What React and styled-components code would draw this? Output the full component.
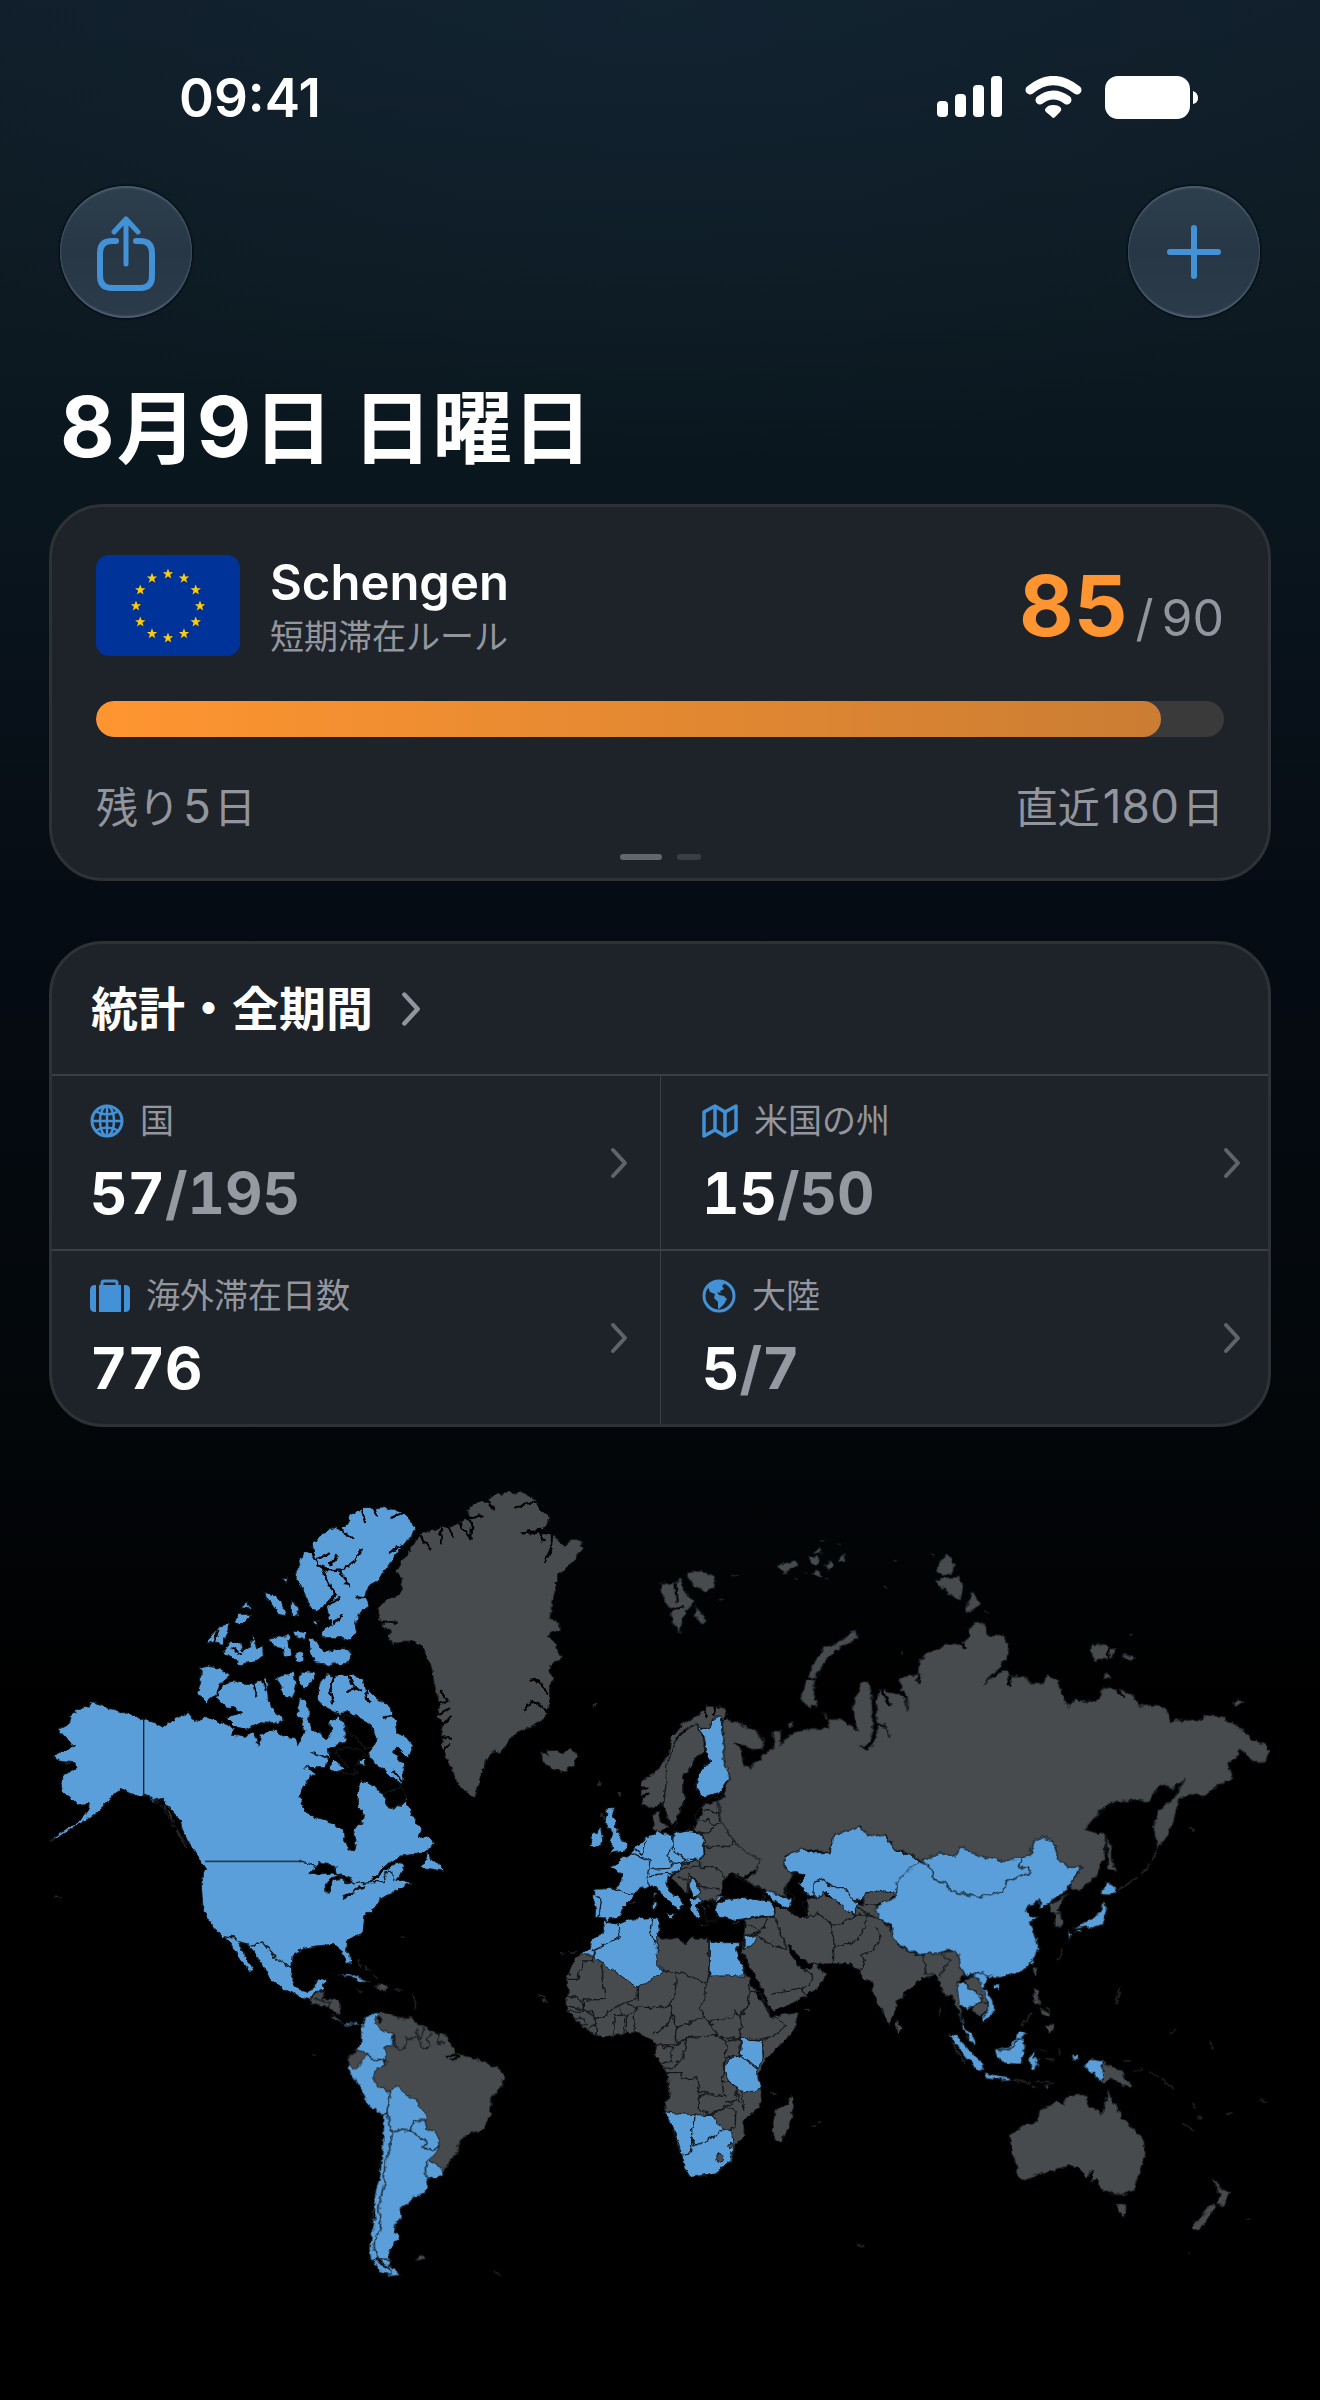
import React from "react";
import styled, { createGlobalStyle } from "styled-components";

const BLUE = "#4391d6";
const VISITED = "#5a9fda";
const LAND = "#474b4d";
const LINE = "#14191d";
const SEA = "#010203";

const GlobalStyle = createGlobalStyle`
  *,
  *::before,
  *::after {
    box-sizing: border-box;
  }

  body {
    margin: 0;
    background: #000;
    color: #fff;
    font-family: Inter, "Noto Sans CJK JP", sans-serif;
  }

  h1,
  h2,
  p {
    margin: 0;
  }
`;

const Page = styled.main`
  min-height: 100vh;
  padding: 68px 49px 0;
  background:
    radial-gradient(
      ellipse 900px 460px at 50% 0,
      rgba(24, 50, 72, 0.25),
      rgba(24, 50, 72, 0)
    ),
    linear-gradient(
      #101e29 0,
      #0d1a22 300px,
      #0a161e 480px,
      #060c14 900px,
      #03070a 1420px,
      #000 1700px
    );
`;

const StatusBar = styled.header`
  display: flex;
  align-items: center;
  justify-content: space-between;
  height: 60px;
  padding: 0 73px 0 130px;
`;

const Time = styled.time`
  font-size: 53px;
  font-weight: 600;
  line-height: 60px;
`;

const Indicators = styled.div`
  display: flex;
  align-items: center;
  gap: 23px;
  padding-bottom: 2px;
`;

const Toolbar = styled.nav`
  display: flex;
  justify-content: space-between;
  margin-top: 58px;
  padding: 0 11px;
`;

const RoundButton = styled.button`
  display: flex;
  align-items: center;
  justify-content: center;
  width: 132px;
  height: 132px;
  padding: 0;
  border: 0;
  border-radius: 50%;
  background: linear-gradient(#2d3e4d, #273746 50%, #2b3b4a);
  box-shadow:
    inset 0 2px 2px rgba(150, 175, 200, 0.3),
    inset 0 -2px 2px rgba(150, 175, 200, 0.35),
    0 0 2px 1px rgba(0, 0, 0, 0.7);
  color: ${BLUE};
`;

const Heading = styled.h1`
  margin-top: 60px;
  padding-left: 11px;
  font-size: 80px;
  font-weight: 700;
  line-height: 100px;

  span {
    margin-right: 2px;
    font-size: 84px;
    line-height: 84px;
  }
`;

const Card = styled.section`
  border: 3px solid #2e3237;
  border-radius: 54px;
  background: #1e232a;
  overflow: hidden;
`;

const StayCard = styled(Card)`
  margin-top: 26px;
  padding: 48px 44px 18px;
`;

const StayHeader = styled.div`
  display: flex;
  align-items: flex-start;
  gap: 30px;
  height: 101px;
`;

const StayName = styled.h2`
  font-size: 49px;
  font-weight: 600;
  line-height: 56px;
`;

const StayRule = styled.p`
  color: #94969e;
  font-size: 34px;
  line-height: 52px;
`;

const StayCount = styled.p`
  display: flex;
  align-items: baseline;
  gap: 8px;
  margin-left: auto;
  color: #92959d;
  font-size: 50px;
  line-height: 102px;

  strong {
    color: #ff9530;
    font-size: 84px;
    font-weight: 700;
  }
`;

const Track = styled.div`
  height: 36px;
  margin-top: 45px;
  border-radius: 18px;
  background: #3b3a3b;
  overflow: hidden;
`;

const Fill = styled.div`
  height: 100%;
  border-radius: 18px;
  background: linear-gradient(90deg, #ff9530, #cb7d33);
`;

const StayFooter = styled.div`
  display: flex;
  justify-content: space-between;
  height: 60px;
  margin-top: 39px;
  color: #92959d;
  font-size: 42px;
  line-height: 60px;

  span {
    margin: 0 3px;
    font-size: 46px;
  }
`;

const Pager = styled.div`
  display: flex;
  justify-content: center;
  gap: 15px;
  margin-top: 18px;
`;

const PagerMark = styled.span`
  width: ${(props) => (props.$active ? 42 : 24)}px;
  height: 6px;
  border-radius: 3px;
  background: ${(props) => (props.$active ? "#62666e" : "#393e45")};
`;

const StatsCard = styled(Card)`
  margin-top: 60px;
`;

const StatsLink = styled.a`
  display: flex;
  align-items: center;
  gap: 28px;
  height: 130px;
  padding: 0 39px;
  color: #fff;
  text-decoration: none;

  h2 {
    font-size: 47px;
    font-weight: 700;
    line-height: 60px;
  }
`;

const StatsGrid = styled.div`
  display: grid;
  grid-template-columns: 1fr 1fr;
`;

const StatCell = styled.a`
  display: flex;
  align-items: center;
  justify-content: space-between;
  height: 175px;
  padding: 0 32px 0 38px;
  border-top: 2px solid #3b3f45;
  color: #fff;
  text-decoration: none;

  &:nth-child(even) {
    padding-left: 41px;
    padding-right: 27px;
    border-left: 1px solid #3b3f45;
  }
`;

const StatLabel = styled.p`
  display: flex;
  align-items: center;
  gap: 16px;
  color: #94969e;
  font-size: 34px;
  line-height: 48px;

  svg {
    color: ${BLUE};
  }
`;

const StatValue = styled.p`
  margin-top: 12px;
  font-size: 58px;
  font-weight: 700;
  font-variant-numeric: tabular-nums;
  line-height: 72px;

  span {
    color: #9699a2;
  }
`;

const MapFigure = styled.figure`
  margin: 54px 0 0;

  svg {
    display: block;
    width: 100%;
    height: auto;
  }
`;

const SignalIcon = () => (
  <svg width="65" height="43" viewBox="0 0 65 43" fill="#fff">
    <rect x="0" y="25" width="11" height="16" rx="4" />
    <rect x="18" y="18" width="11" height="23" rx="4" />
    <rect x="36" y="9" width="11" height="32" rx="4" />
    <rect x="54" y="0" width="11" height="41" rx="4" />
  </svg>
);

const WifiIcon = () => (
  <svg width="57" height="43" viewBox="0 0 57 43" fill="none">
    <g stroke="#fff" strokeWidth="9" strokeLinecap="round">
      <path d="M5 14Q28 -5 52 14" />
      <path d="M15 24Q28 14 42 24" />
    </g>
    <path
      d="M28 29Q34 29 36 32Q37 34 35 36L30 41Q28 43 27 41L21 36Q19 34 21 32Q23 29 28 29Z"
      fill="#fff"
    />
  </svg>
);

const BatteryIcon = () => (
  <svg width="93" height="43" viewBox="0 0 93 43" fill="#fff">
    <rect x="0" y="0" width="85" height="43" rx="13" />
    <path d="M88 15Q93 17 93 22T88 28Z" />
  </svg>
);

const ShareIcon = () => (
  <svg
    width="60"
    height="80"
    viewBox="0 -4 60 80"
    fill="none"
    stroke="currentColor"
    strokeWidth="6"
    strokeLinecap="round"
    strokeLinejoin="round"
  >
    <path d="M20 25H16Q4 25 4 37V60Q4 72 16 72H44Q56 72 56 60V37Q56 25 44 25H40" />
    <path d="M30 48V4M18 16L30 3L42 16" strokeWidth="5" />
  </svg>
);

const PlusIcon = () => (
  <svg
    width="60"
    height="60"
    viewBox="0 0 60 60"
    stroke="currentColor"
    strokeWidth="6"
    strokeLinecap="round"
  >
    <path d="M30 6V54M6 30H54" />
  </svg>
);

const Chevron = ({ size, color }) => (
  <svg
    width={size}
    height={size * 2 - 4}
    viewBox="0 0 18 32"
    fill="none"
    stroke={color}
    strokeWidth="4"
    strokeLinecap="round"
    strokeLinejoin="round"
  >
    <path d="M3 3L15 16L3 29" />
  </svg>
);

const GlobeIcon = () => (
  <svg
    width="34"
    height="34"
    viewBox="0 0 34 34"
    fill="none"
    stroke="currentColor"
    strokeWidth="2.5"
  >
    <circle cx="17" cy="17" r="15" strokeWidth="3" />
    <ellipse cx="17" cy="17" rx="7" ry="15" />
    <path d="M17 2V32M2 17H32M5 7Q17 14 29 7M5 27Q17 20 29 27" />
  </svg>
);

const MapIcon = () => (
  <svg
    width="36"
    height="34"
    viewBox="0 0 36 34"
    fill="none"
    stroke="currentColor"
    strokeWidth="3.5"
    strokeLinejoin="round"
  >
    <path d="M2 8L13 2L23 8L34 2V26L23 32L13 26L2 32ZM13 2V26M23 8V32" />
  </svg>
);

const SuitcaseIcon = () => (
  <svg width="40" height="34" viewBox="0 0 40 34" fill="currentColor">
    <path d="M6 6V33H5Q0 33 0 28V11Q0 6 5 6Z" />
    <path d="M34 6V33H35Q40 33 40 28V11Q40 6 35 6Z" />
    <rect x="9" y="6" width="22" height="27" />
    <path
      d="M12 7V4Q12 2 14 2H25Q27 2 27 4V7"
      fill="none"
      stroke="currentColor"
      strokeWidth="3"
    />
  </svg>
);

const AmericasIcon = () => (
  <svg width="34" height="34" viewBox="0 0 34 34" fill="currentColor">
    <circle
      cx="17"
      cy="17"
      r="15"
      fill="none"
      stroke="currentColor"
      strokeWidth="3"
    />
    <path d="M4 9Q9 1 18 1L24 3L20 7L22 10L18 12L19 14L15 13L17 16L22 17L25 20L22 25L17 30L16 29L16 23L12 19L13 15L8 13L6 8Z" />
  </svg>
);

const EuFlag = () => (
  <svg width="144" height="101" viewBox="0 0 144 101">
    <rect width="144" height="101" rx="13" fill="#003399" />
    <g transform="translate(72 51)">
      {Array.from({ length: 12 }, (_, i) => {
        const angle = (i * Math.PI) / 6;
        return (
          <path
            key={i}
            transform={`translate(${32 * Math.sin(angle)} ${-32 * Math.cos(angle)})`}
            d="M0 -5.5L1.4 -1.7H5.2L2.1 .7L3.3 4.5L0 2.2L-3.3 4.5L-2.1 .7L-5.2 -1.7H-1.4Z"
            fill="#ffcc00"
          />
        );
      })}
    </g>
  </svg>
);

// Each region is drawn in its own grid: origin is where the grid starts on
// the map, unit is how many grid steps (x, y) make one map pixel.
const regions = [
  {
    name: "north-america",
    origin: [40, 1470],
    unit: [3, 3],
    visited: [
      // mainland
      "155,692 195,708 230,718 270,730 310,745 345,755 368,768 390,750 420,738 450,722 460,748 480,752 485,735 520,745 555,760 585,772 575,792 610,797 645,785 655,830 662,790 700,775 730,795 765,800 772,825 785,795 795,780 785,745 768,730 780,680 795,685 808,720 803,745 815,775 845,790 860,812 872,790 870,750 900,738 915,770 915,810 885,825 865,832 870,860 815,845 862,862 855,890 795,890 825,905 800,930 780,975 790,1010 810,1035 850,1045 885,1065 910,1075 912,1100 925,1135 940,1140 948,1110 940,1075 965,1060 970,1030 955,1000 955,960 960,930 985,935 1010,950 1030,975 1035,1000 1060,1018 1085,1000 1100,985 1110,1020 1130,1055 1145,1075 1135,1100 1165,1095 1180,1120 1165,1140 1130,1150 1080,1155 1050,1175 1000,1220 1030,1205 1055,1183 1080,1175 1095,1185 1085,1205 1070,1225 1115,1235 1060,1262 1020,1285 1005,1310 975,1332 969,1385 945,1395 920,1410 918,1430 930,1455 932,1475 922,1478 905,1440 880,1420 830,1425 790,1432 760,1450 752,1516 770,1552 800,1560 822,1550 830,1525 860,1523 850,1555 825,1562 810,1585 780,1578 730,1555 690,1525 670,1484 638,1440 610,1412 596,1415 615,1455 640,1500 628,1500 590,1450 570,1410 545,1395 509,1355 488,1300 484,1240 488,1205 500,1195 470,1150 445,1115 425,1070 420,1045 395,1020 370,985 345,990 315,975 290,975 265,965 240,955 225,965 205,990 180,1015 150,1040 110,1065 60,1095 25,1110 70,1080 115,1055 140,1025 148,1000 120,1003 95,985 70,965 60,935 75,910 108,895 105,875 60,872 40,852 70,840 105,825 85,810 55,775 85,760 90,735 120,712 145,708",
      // newfoundland
      "1165,1145 1172,1165 1200,1180 1212,1202 1180,1195 1148,1190",
      // ellesmere
      "818,212 850,190 885,165 900,175 915,165 935,130 965,113 1000,112 1030,107 1060,115 1085,125 1110,150 1124,170 1115,195 1085,225 1065,255 1040,290 1015,325 985,350 978,375 987,405 955,430 945,460 950,485 930,510 900,500 845,500 840,485 880,460 868,440 860,405 835,420 815,415 800,380 785,350 768,320 775,285 788,245 805,245 820,250",
      "500,515 540,465 568,458 560,490 545,520 525,515",
      "550,545 570,515 600,512 610,540 630,530 637,490 650,530 668,525 670,555 640,570 600,582 580,560",
      "583,450 600,430 635,430 605,460",
      "600,410 625,395 632,412",
      "675,365 700,370 725,395 738,435 715,430 695,400 678,380",
      "755,390 780,415 775,432 755,430",
      "690,505 715,495 745,495 752,550 735,560 730,530 700,525",
      "762,480 797,485 792,505 770,500",
      "768,545 790,545 792,572 770,570",
      "805,500 830,510 850,545 900,532 925,535 938,550 925,577 870,580 820,575",
      "820,450 832,450 832,465 822,462",
      "730,320 742,320 740,335",
      "480,590 510,585 545,595 570,615 540,640 530,670 500,695 485,680 470,668 482,635",
      "530,680 550,645 580,628 610,640 640,640 680,618 685,690 700,720 735,745 700,758 660,755 620,775 590,770 560,740 605,725 590,712 560,708",
      "707,620 740,610 762,600 768,650 757,685 730,672 720,640",
      "782,600 825,605 815,635 790,655 778,640",
      // baffin
      "838,640 860,612 885,615 930,610 965,620 975,645 1010,680 1045,705 1065,745 1070,785 1100,800 1120,825 1105,862 1075,832 1058,840 1090,880 1088,940 1060,925 1040,905 1005,880 985,850 1000,830 1012,800 990,760 950,735 920,720 900,730 860,712 835,690",
      "870,897 880,862 917,895 890,902",
      "965,785 978,785 978,805 965,805",
      "955,868 978,868 976,882 958,880",
    ],
    land: [],
    cuts: [
      "815,240 832,280 860,298 910,295 945,270 965,235",
      "850,300 870,345 888,372 852,410",
      "868,280 890,255",
      "835,262 870,248",
      "895,300 930,345",
      "890,170 940,200",
      "1050,243 1090,220",
      "965,113 975,150",
      "1000,112 1010,135",
      "1055,140 1085,128",
      "985,350 1010,340",
      "950,376 985,380",
      "885,455 905,432",
      "870,400 900,380",
      "575,530 605,550",
      "535,480 520,515",
      "885,618 870,660 880,700",
      "925,615 935,640 960,655",
      "925,660 955,650",
      "640,640 652,680",
      "665,625 678,655",
      "975,645 985,690",
      "1030,740 1060,735",
      "1060,900 1085,930",
      "1040,1190 1000,1225",
    ],
    waters: [
      "810,1207 840,1172 885,1190 890,1212 860,1206 835,1210",
      "850,1262 868,1222 905,1212 935,1220 930,1240 905,1225 880,1230 868,1262",
      "905,1275 940,1262 938,1270 910,1285",
      "940,1255 975,1243 970,1254",
      "890,838 930,830 960,835 985,860 960,860 940,895 955,905 930,910 900,900 925,885 895,860",
      "905,735 950,735 985,760 1010,800 1000,830 970,832 955,800 935,800 920,770",
      "1060,955 1085,945 1100,985 1060,1015 1035,1000 1030,970",
    ],
    borders: [
      "311,972 345,985 370,1010 400,1060 440,1120",
      "780,1171 830,1187",
      "551,1397 583,1401 629,1424 670,1415 707,1461 753,1489",
      "890,1210 935,1240 985,1232 1030,1232 1045,1200 1058,1205 1062,1230",
    ],
    straight: ["311,745 311,972", "495,1171 780,1171"],
    specks: ["375,1000 400,1050", "410,1080 440,1130", "50,1275 62,1278"],
  },
  {
    name: "greenland",
    origin: [360, 1470],
    unit: [3, 3],
    visited: [],
    land: [
      "455,65 490,65 510,75 530,90 540,115 565,135 568,155 550,175 575,185 600,215 615,225 630,207 655,210 672,230 650,260 625,285 600,310 590,340 580,370 572,410 570,445 590,450 600,475 565,490 575,510 590,520 595,550 610,555 565,585 570,600 580,625 568,650 568,700 565,730 540,755 500,775 465,785 440,820 420,845 400,840 378,870 365,905 355,945 345,980 325,965 295,945 280,905 262,870 245,820 245,790 250,760 232,735 240,700 225,650 215,590 195,540 165,512 135,510 100,520 85,500 90,480 65,460 50,415 80,385 120,370 130,320 108,305 125,275 145,250 170,205 190,185 240,170 275,165 300,155 330,140 320,115 350,95 385,90 405,72 440,62",
      "545,840 565,856 560,840 590,838 610,845 630,832 652,860 640,885 600,902 575,890 548,872",
    ],
    cuts: [
      "180,195 210,235",
      "243,170 245,215",
      "262,162 282,198",
      "300,160 333,205 337,160 318,140 368,133",
      "385,90 402,112",
      "465,112 495,100 530,95",
      "488,187 540,180 580,188 575,230 556,272",
      "540,182 548,210",
      "510,628 540,632 560,665",
      "495,720 515,690 535,700 565,725",
      "65,455 110,455",
      "240,660 265,690 235,700",
      "235,730 270,712",
      "250,760 270,740",
      "248,800 270,800",
      "250,840 268,820",
      "600,320 590,335",
    ],
    waters: [],
    borders: [],
    specks: ["700,705 710,698", "717,930 722,945", "775,965 780,975"],
  },
  {
    name: "south-america",
    origin: [300, 1930],
    unit: [3, 3],
    visited: [
      "195,260 215,250 240,240 300,300 300,358 370,500 425,620 430,700 428,735 405,745 380,738 388,768 370,790 335,797 330,820 305,822 302,860 282,885 285,905 298,915 280,940 265,960 270,1000 300,1032 270,1036 240,1020 215,985 210,950 215,910 217,850 225,790 240,730 248,640 252,555 200,520 180,470 145,415 148,375 170,358 183,330 183,290",
      "125,278 150,280 170,272 182,285 165,278 145,287",
      "112,132 150,127 182,140 210,152 185,154 155,136",
    ],
    land: [
      "225,262 240,240 265,250 300,262 340,262 352,280 375,285 400,305 435,310 455,340 465,365 515,380 560,395 605,418 613,440 600,470 575,500 572,550 550,595 510,608 475,632 472,665 450,690 430,722 415,702 385,688 415,655 420,630 405,600 380,595 380,550 355,525 350,505 305,485 300,465 265,478 230,465 218,440 232,412 258,405 255,348 278,345 277,308 235,290",
      "146,380 170,355 203,368 190,390 165,414 148,400",
      "30,208 50,180 75,180 65,203 120,205 118,252 95,238 75,222 35,220",
      "92,252 110,255 127,275 115,272",
      "225,165 245,158 270,172 245,178",
      "170,177 190,179 180,183",
      "348,983 362,975 382,980 365,990",
    ],
    cuts: [
      "240,258 240,275",
      "440,378 460,368 478,378 455,386",
      "225,835 215,900",
      "225,985 265,1010",
    ],
    waters: [],
    borders: [
      "203,368 225,388 255,390 258,405",
      "265,478 268,510 260,545 275,600 270,650 255,690 252,760 236,830 242,890 222,940 232,985 268,985 270,1030",
      "252,555 262,545",
      "275,600 300,597 330,600 340,570 378,567",
      "330,600 380,630 372,652 400,655 415,648",
      "385,688 376,710 378,738",
      "280,308 282,340 300,358 318,345 318,322",
      "350,290 355,320 318,322",
      "372,290 365,310 358,325 370,352 390,347 382,325 390,308",
      "420,310 415,340 435,335",
      "50,205 90,215 85,232",
    ],
    specks: [
      "175,90 180,110",
      "195,100 205,120",
      "220,130 228,140",
      "285,178 305,176",
      "338,190 347,210 346,235",
      "38,370 48,375",
      "715,190 720,196",
      "725,208 735,205",
      "585,1020 600,1032",
      "305,18 310,20",
    ],
  },
  {
    name: "europe",
    origin: [560, 1640],
    unit: [3, 3],
    visited: [
      // finland
      "408,248 425,262 450,262 460,228 485,228 485,255 493,290 492,320 497,370 512,405 480,455 430,467 412,450 412,405 450,360 440,335 432,285",
      "102,745 165,742 180,735 185,700 150,675 175,668 180,655 215,635 240,605 258,590 285,585 290,570 310,578 340,580 380,570 428,577 432,640 418,655 365,668 360,690 325,705 320,735 345,765 375,787 362,792 355,812 345,795 300,755 285,735 265,735 240,745 220,760 215,775 190,800 180,825 140,837 125,830 105,825 108,795 102,780",
      "318,820 347,817 340,834",
      "278,780 288,780 287,805 278,805",
      "281,755 288,755 286,772",
      "138,500 165,500 158,520 170,540 165,560 180,580 188,600 207,605 195,630 145,638 165,618 148,605 158,575 135,545 140,520",
      "95,578 125,562 130,590 120,615 90,622",
      "388,775 420,768 445,775 430,782 405,790 422,825 410,832 390,805",
      "470,790 505,775 540,768 600,777 635,780 645,822 600,825 560,832 520,838 480,828 466,810",
      "462,768 490,768 470,782",
      "672,650 720,622 760,635 810,635 820,580 895,557 920,570 945,588 970,578 1010,630 1050,640 1085,665 1060,690 1010,745 1005,762 950,750 915,770 890,795 885,822 840,795 800,755 762,770 740,755 715,735 735,705 700,695 690,700 672,670",
    ],
    land: [
      // scandinavia
      "440,195 490,200 500,220 490,240 485,228 460,228 450,262 425,262 408,248 430,290 435,335 410,345 405,375 375,400 370,450 380,475 360,500 355,535 330,550 322,520 305,485 275,505 250,490 243,460 245,420 290,390 325,340 335,290 370,245 420,220",
      "275,522 300,510 300,545 325,555 300,572 282,562",
      // eastern europe
      "410,540 430,520 428,495 475,478 485,478 490,545 525,600 600,640 605,670 598,690 560,715 520,700 485,745 470,775 430,780 405,768 422,755 410,720 388,708 385,758 350,725 330,710 360,690 365,670 418,655 435,640 430,575 405,570",
      // middle east to the bay of bengal
      "558,835 645,825 645,800 670,805 700,820 735,832 742,820 745,790 735,770 765,772 790,758 830,780 870,815 885,822 890,795 915,760 950,750 1010,757 985,780 950,792 960,835 990,860 1010,910 1060,935 1120,940 1190,925 1200,970 1120,1005 1085,1010 1045,1050 1010,1080 1005,1120 985,1148 965,1110 940,1060 935,1020 915,1015 890,985 875,968 820,968 770,970 740,962 715,945 700,925 685,912 690,935 705,960 725,982 750,985 767,965 775,985 800,1000 770,1045 700,1085 640,1112 628,1095 600,1030 550,940 545,930 552,880",
      "1010,1140 1027,1165 1015,1175 1008,1165",
    ],
    over: [
      "388,708 410,720 422,755 400,767 388,740",
      "612,748 650,755 665,770 690,768 697,795 680,802 660,790 635,775",
      "552,888 585,880 590,893 570,915 552,925",
    ],
    cuts: [
      "245,440 262,440",
      "248,465 265,458",
      "350,290 375,270",
      "430,205 440,225",
      "465,200 462,220",
      "400,480 375,478",
    ],
    waters: [
      "680,715 705,695 735,698 733,710 715,725 745,765 740,780 728,790 742,825 715,832 690,800 700,765 680,745",
      "480,760 490,715 515,695 535,712 550,720 600,745 615,765 600,778 545,768 500,778",
      "545,712 580,685 590,690 575,715",
      "412,345 440,335 448,358 412,405 405,440 415,455 430,467 480,456 495,465 440,475 425,500 405,520 412,550 385,570 340,572 350,540 375,478 370,410",
      "425,785 440,840 470,840 466,785 440,778",
      "885,783 915,770 912,785 900,790",
    ],
    borders: [
      "405,250 370,268 345,300 320,370 318,430 310,490",
      "108,765 125,768 118,825",
      "165,742 195,755 220,760",
      "215,635 270,660 265,685 262,710 265,735",
      "225,625 250,640 258,600",
      "338,580 340,625 320,640 330,665 360,668 385,655 418,655",
      "345,632 380,655",
      "265,685 325,682 340,670",
      "262,710 290,700 325,697 358,690",
      "410,540 445,538 462,552 450,575 430,577",
      "430,505 475,515 480,545 462,552",
      "435,615 510,620 525,600",
      "418,655 420,680 470,680 495,710",
      "385,700 410,720 425,740 475,742",
      "365,685 400,672 420,680",
      "350,705 385,720 380,755",
      "560,850 600,870 552,885 552,925",
      "580,885 615,860 620,832",
      "645,825 660,870 680,920",
      "585,880 640,915 680,925",
      "730,985 757,1000 750,1030 725,1040 632,1060",
      "725,1040 735,1060",
      "735,832 770,815 812,845 822,905 820,968",
      "812,850 850,848 880,825 918,820 915,860 890,900 822,922",
      "918,820 955,830 990,860",
      "950,860 960,890 940,930 905,945 915,980 895,990",
      "762,770 762,725 790,715 820,740 855,740 880,780 915,775 905,790 950,792",
      "890,800 950,830",
      "1085,665 1060,695 1040,695 1010,745 1005,765",
      "1010,912 1060,938 1095,945 1095,1000",
      "1095,965 1130,965 1135,1000",
      "1120,950 1160,955 1145,1000",
    ],
    specks: [
      "420,850 445,852",
      "430,800 435,808",
      "445,790 450,800",
      "520,848 540,842",
      "215,790 225,786",
      "118,420 124,426",
      "175,455 180,465",
      "125,515 130,535",
      "100,195 110,190",
      "735,1108 745,1108",
    ],
  },
  {
    name: "africa",
    origin: [540, 1880],
    unit: [3, 3],
    visited: [],
    land: [
      "190,118 235,130 270,115 330,110 355,108 362,130 350,160 365,175 400,170 440,190 455,170 500,175 540,185 605,185 583,198 600,240 625,290 650,340 680,375 690,405 775,395 770,430 735,480 690,520 665,555 655,600 663,630 665,675 620,710 612,720 612,765 585,790 575,840 540,870 500,882 450,890 438,870 430,830 410,790 400,740 372,692 388,640 380,575 345,525 350,490 320,470 300,455 270,455 240,462 175,465 130,440 85,395 80,370 85,330 80,290 105,235 150,205 155,180 188,150",
      "755,645 763,670 745,740 725,780 705,778 697,740 705,690 740,670",
    ],
    over: [
      "190,118 235,130 240,168 215,180 160,205 160,222 120,222 150,205 155,180 188,150",
      "235,130 270,115 355,108 362,130 350,160 352,210 350,250 370,270 330,300 292,318 165,232 165,205 215,180 240,168",
      "508,180 540,185 600,185 588,200 600,240 615,285 508,285",
      "600,465 625,475 668,478 670,530 655,560 600,525 605,490",
      "565,530 600,525 652,565 655,600 660,630 612,632 570,605 552,570",
      "372,692 420,698 465,702 515,700 545,745 575,750 580,800 565,850 530,875 450,890 438,870 425,820 400,740",
    ],
    cuts: [],
    waters: [],
    borders: [
      "335,112 330,150 350,190",
      "80,292 115,292 118,270 128,265 128,240 160,240 160,222",
      "185,250 195,355 130,357",
      "292,318 292,355 255,365 205,390 195,408 165,408 130,385 130,357",
      "370,270 410,275 405,340 390,375 340,380 290,378 255,365",
      "410,270 505,308 508,180",
      "495,308 495,350 480,385 490,405 440,430 410,438 398,400 390,375",
      "490,405 505,420 575,410 585,390 600,410 625,370 630,290",
      "505,420 535,465 600,475 605,435 600,410",
      "410,438 405,470 415,490 440,470 530,463",
      "398,400 385,430 340,460",
      "287,378 278,450",
      "252,455 255,405 285,395",
      "222,458 222,405 250,402 240,380",
      "262,453 262,405",
      "170,465 165,408",
      "83,345 110,345 130,370 130,385 85,375",
      "85,390 160,392 165,430 145,440",
      "105,410 125,412 142,430 125,438",
      "350,492 415,492 440,470 430,530 400,560 375,562",
      "365,500 398,500 395,540 368,548",
      "380,575 420,575 430,595 470,590 478,630 555,648 545,605 552,570 555,530 560,480 530,463",
      "475,630 475,685 510,700 560,675 585,660 590,620 565,600 545,605",
      "478,648 495,642 495,630",
      "515,700 560,678 588,690 585,735 565,750",
      "590,618 595,655 612,688 605,632",
      "560,662 590,660",
      "560,530 600,525 600,475 562,480",
      "630,335 660,330 685,395 740,435 700,465 660,475 625,475",
      "670,530 668,490 675,475",
      "465,702 462,740 455,745 455,815 430,820",
      "455,765 462,795 500,780 545,748",
    ],
    spots: [
      "528,830 538,818 550,825 545,838 532,842",
      "566,795 573,786 579,795 572,802",
    ],
    specks: [
      "65,215 75,218",
      "90,214 112,212",
      "0,345 15,350",
      "8,358 18,360",
      "695,635 705,640",
      "817,735 823,735",
      "835,727 842,725",
      "800,388 808,388",
    ],
  },
  {
    name: "east-asia",
    origin: [840, 1840],
    unit: [3, 3],
    visited: [
      "245,60 400,-40 600,-60 700,40 725,75 690,130 660,165 620,190 600,205 605,185 590,178 555,208 570,225 597,225 568,245 590,290 595,320 575,365 540,395 510,400 485,410 440,405 430,392 385,405 370,395 358,370 358,345 330,325 300,335 240,340 200,325 160,300 155,255 120,235 105,200 165,170 170,125 195,95",
      "800,120 832,145 808,162 785,160",
      "792,180 800,205 787,250 740,268 740,255 700,262 720,250 770,225 785,200",
      "685,270 697,280 688,300",
      "702,272 725,262 722,274",
      "462,432 480,432 475,445 462,443",
      "350,430 375,425 385,445 420,460 425,485 395,495 378,505 360,490 365,535 382,568 400,585 410,617 390,600 370,560 358,520 352,470",
      "395,405 430,392 445,410 430,440 460,480 465,510 430,542 425,530 445,510 445,485 415,440 418,415",
      "325,580 350,585 400,640 430,665 432,690 410,685 370,640",
      "432,697 470,702 515,715 500,720 435,708",
      "465,625 510,615 540,570 560,575 548,590 555,620 540,670 480,665 468,640",
      "620,628 585,630 578,650 602,650 590,662 600,685 588,672 583,690 574,688 568,655 575,632",
      "695,643 718,645 715,655 700,655",
      "730,672 760,655 790,662 790,722 768,715 762,698 735,680",
      "575,735 590,738 580,740",
      "612,738 628,731 620,740",
    ],
    land: [
      "690,155 660,175 628,190 632,215 645,218 645,258 668,255 665,225 655,205 665,180",
      "300,335 345,330 358,350 360,375 370,400 350,430 355,470 365,530 350,500 340,465 315,465 300,425 285,400 260,400 250,340",
      "375,415 400,405 418,420 425,440 443,485 445,508 420,528 400,510 400,492 425,485 420,458 385,445",
      "790,662 840,690 860,715 880,738 850,735 820,715 790,727",
      "880,695 905,690 900,680 910,685",
      "585,375 592,378 588,405 580,400",
      "582,445 597,450 595,475 602,490 582,480",
      "600,500 632,520 628,530 605,520",
      "615,555 640,548 640,570 628,578",
      "512,880 545,855 590,840 605,805 650,780 670,790 685,765 735,760 745,770 738,790 785,818 800,770 805,745 815,780 830,795 845,830 880,865 912,900 917,940 900,990 880,1048 850,1062 830,1060 785,1050 770,1015 755,1020 758,985 740,1010 720,985 690,972 620,995 550,1015 528,1005 530,980 510,905",
      "830,1090 862,1090 860,1115 850,1125 838,1115",
      "1118,1010 1130,1020 1140,1045 1170,1050 1150,1095 1128,1090 1140,1065",
      "1115,1090 1125,1100 1095,1150 1070,1170 1053,1160 1085,1125",
    ],
    cuts: [],
    waters: [],
    borders: [
      "245,60 275,85 280,115 315,125 335,152 420,168 490,150 495,125 540,105 575,95 560,80 535,80 545,50",
      "475,628 520,620 530,595 550,592",
      "645,218 665,215",
      "300,340 330,355 300,405",
      "400,492 425,485 443,487",
    ],
    specks: [
      "1030,848 1062,870",
      "930,690 955,708",
      "965,715 1000,742",
      "1058,785 1065,800",
      "1075,825 1080,835",
      "1162,820 1176,815",
      "850,658 870,660",
      "575,515 545,555",
      "300,500 300,525",
      "335,605 375,668",
      "520,718 570,724",
      "590,722 640,726",
      "655,625 660,640",
      "615,655 640,655",
      "665,325 655,360",
      "830,490 840,440",
      "1110,600 1118,622",
      "1265,778 1280,780",
      "1220,1133 1230,1135",
      "1045,1235 1050,1237",
      "52,1210 68,1214",
      "990,575 1010,565",
      "625,500 630,515",
    ],
  },
  {
    name: "russia",
    origin: [640, 1500],
    unit: [2.45, 3],
    visited: [],
    land: [
      "200,660 215,655 240,665 285,690 303,720 300,745 275,745 230,722 250,750 252,790 272,803 278,782 298,780 295,760 325,745 330,720 325,690 345,690 345,730 370,700 400,685 440,685 465,680 460,655 490,655 515,672 532,690 522,640 522,610 535,570 540,545 560,545 567,570 570,640 570,700 555,735 535,735 560,745 580,710 583,675 605,680 612,710 600,672 578,665 580,590 590,560 610,575 632,575 650,595 655,630 655,590 640,560 632,530 680,520 685,480 700,460 740,435 790,425 810,405 805,385 825,358 845,375 850,400 890,402 903,430 903,465 885,495 840,550 870,525 890,505 905,525 940,525 955,545 990,545 995,520 1025,540 1035,585 1052,618 1065,595 1110,605 1130,585 1130,560 1165,565 1200,575 1225,615 1270,612 1293,630 1300,665 1310,655 1365,660 1385,645 1430,650 1465,675 1500,715 1530,730 1543,752 1520,790 1495,775 1470,745 1460,775 1440,785 1453,830 1420,850 1385,885 1350,880 1320,895 1310,950 1290,1010 1268,1045 1258,980 1270,930 1305,895 1335,835 1320,850 1300,870 1290,850 1268,860 1248,905 1215,895 1150,905 1120,940 1090,985 1115,995 1140,1000 1140,1060 1120,1120 1080,1170 1055,1165 1055,1140 1070,1125 1080,1097 1050,1100 1025,1070 1010,1015 985,1008 963,1020 955,1065 930,1070 880,1080 810,1055 785,1035 775,1065 735,1055 690,1080 655,1055 625,1045 600,1000 580,1008 555,1000 540,978 475,1000 465,1055 400,1042 355,1065 352,1095 375,1125 355,1160 360,1190 305,1168 258,1138 285,1115 293,1075 240,1035 200,965 190,900 205,885 220,830 205,780 205,700",
      "515,395 530,390 532,412 490,440 462,465 445,500 430,530 425,570 435,618 410,615 392,590 410,530 425,490 450,440 485,425",
      "50,245 75,250 100,235 115,280 135,300 120,320 105,350 98,400 80,365 75,330 55,290",
      "112,215 150,210 185,225 180,260 160,275 130,250",
      "135,315 150,335 162,355 150,370 135,345",
      "338,190 360,185 380,178 388,195 370,200 355,222 345,210",
      "412,170 435,165 440,190 420,190",
      "425,155 440,138 445,155",
      "452,190 470,180 475,195 462,207",
      "482,180 500,160 502,182",
      "420,215 440,208 445,228 430,225",
      "755,157 772,190 765,218 740,225 725,210 735,180",
      "745,230 780,228 792,260 785,298 760,285 740,260 722,240",
      "815,270 835,310 820,325 795,338 805,300",
      "1105,430 1140,430 1165,445 1155,470 1120,480 1105,465",
      "1180,458 1215,470 1205,480 1185,470",
      "1140,512 1155,532 1135,534",
      "1450,608 1465,598 1480,606 1460,615",
      "1143,1005 1153,1030 1155,1075 1167,1112 1150,1105 1145,1060",
      "363,668 372,660 375,675 365,680",
      "448,632 462,650 455,652",
    ],
    cuts: [
      "412,530 430,538",
      "590,560 600,590 615,612",
      "905,520 907,555",
      "685,520 682,542",
      "85,250 92,300",
      "70,330 105,318",
      "1150,440 1148,465",
      "785,420 792,438",
      "1170,570 1185,590",
    ],
    waters: [],
    borders: [],
    specks: [
      "1265,1050 1255,1082",
      "1248,1090 1228,1120",
      "1215,1130 1175,1165",
      "1345,980 1355,990",
      "445,118 452,120",
      "483,127 490,129",
      "405,215 410,218",
      "622,178 628,180",
      "598,258 604,262",
      "712,160 720,163",
      "845,328 852,335",
      "195,296 205,294",
      "225,224 238,222",
      "640,455 642,462",
      "1200,402 1204,400",
      "455,232 458,235",
      "380,232 384,234",
    ],
  },
];

const toPath = (points, closed) =>
  `M${points.split(" ").join("L")}${closed ? "Z" : ""}`;

const placeRegion = ({ origin, unit }) =>
  `translate(${origin.join(" ")}) scale(${1 / unit[0]} ${1 / unit[1]})`;

const Shapes = ({ list = [], fill }) =>
  list.map((points) => (
    <path
      key={points}
      d={toPath(points, true)}
      fill={fill}
      stroke={LINE}
      strokeWidth="3"
    />
  ));

const Strokes = ({ list = [], color, width }) =>
  list.map((points) => (
    <path
      key={points}
      d={toPath(points)}
      fill="none"
      stroke={color}
      strokeWidth={width}
    />
  ));

const Region = ({ region }) => (
  <g
    transform={placeRegion(region)}
    strokeLinejoin="round"
    strokeLinecap="round"
  >
    <Shapes list={region.visited} fill={VISITED} />
    <Shapes list={region.land} fill={LAND} />
    <Shapes list={region.over} fill={VISITED} />
    <Shapes list={region.spots} fill={LAND} />
    <Shapes list={region.waters} fill={SEA} />
    <Strokes list={region.cuts} color={SEA} width="7" />
    <Strokes list={region.borders} color={LINE} width="4" />
    <Strokes list={region.specks} color="#2a2d2f" width="4" />
  </g>
);

const WorldMap = () => (
  <svg viewBox="49 1480 1222 820" role="img" aria-label="訪問した国の地図">
    <defs>
      <filter id="coast" x="0" y="0" width="100%" height="100%">
        <feTurbulence
          type="fractalNoise"
          baseFrequency="0.16"
          numOctaves="2"
          seed="4"
        />
        <feDisplacementMap
          in="SourceGraphic"
          scale="6"
          xChannelSelector="R"
          yChannelSelector="G"
        />
      </filter>
    </defs>
    <g filter="url(#coast)">
      {regions.map((region) => (
        <Region key={region.name} region={region} />
      ))}
    </g>
    {regions.map((region) => (
      <g key={region.name} transform={placeRegion(region)}>
        <Strokes list={region.straight} color={LINE} width="4" />
      </g>
    ))}
  </svg>
);

const used = 85;
const limit = 90;

const stats = [
  { id: "countries", icon: GlobeIcon, label: "国", value: "57", total: "/195" },
  { id: "states", icon: MapIcon, label: "米国の州", value: "15", total: "/50" },
  { id: "days", icon: SuitcaseIcon, label: "海外滞在日数", value: "776" },
  { id: "continents", icon: AmericasIcon, label: "大陸", value: "5", total: "/7" },
];

const App = () => (
  <>
    <GlobalStyle />
    <Page lang="ja">
      <StatusBar>
        <Time>09:41</Time>
        <Indicators>
          <SignalIcon />
          <WifiIcon />
          <BatteryIcon />
        </Indicators>
      </StatusBar>
      <Toolbar>
        <RoundButton type="button" aria-label="共有">
          <ShareIcon />
        </RoundButton>
        <RoundButton type="button" aria-label="追加">
          <PlusIcon />
        </RoundButton>
      </Toolbar>
      <Heading>
        <span>8</span>月<span>9</span>日 日曜日
      </Heading>
      <StayCard>
        <StayHeader>
          <EuFlag />
          <div>
            <StayName>Schengen</StayName>
            <StayRule>短期滞在ルール</StayRule>
          </div>
          <StayCount>
            <strong>{used}</strong>
            <span>/</span>
            <span>{limit}</span>
          </StayCount>
        </StayHeader>
        <Track
          role="progressbar"
          aria-label="滞在日数"
          aria-valuenow={used}
          aria-valuemax={limit}
        >
          <Fill style={{ width: `${(used / limit) * 100}%` }} />
        </Track>
        <StayFooter>
          <p>
            残り<span>{limit - used}</span>日
          </p>
          <p>
            直近<span>180</span>日
          </p>
        </StayFooter>
        <Pager>
          <PagerMark $active />
          <PagerMark />
        </Pager>
      </StayCard>
      <StatsCard>
        <StatsLink href="#stats">
          <h2>統計・全期間</h2>
          <Chevron size={20} color="#92959d" />
        </StatsLink>
        <StatsGrid>
          {stats.map(({ id, icon: Icon, label, value, total }) => (
            <StatCell key={id} href={`#${id}`}>
              <div>
                <StatLabel>
                  <Icon />
                  {label}
                </StatLabel>
                <StatValue>
                  {value}
                  {total && <span>{total}</span>}
                </StatValue>
              </div>
              <Chevron size={18} color="#5f636a" />
            </StatCell>
          ))}
        </StatsGrid>
      </StatsCard>
      <MapFigure>
        <WorldMap />
      </MapFigure>
    </Page>
  </>
);

export default App;
